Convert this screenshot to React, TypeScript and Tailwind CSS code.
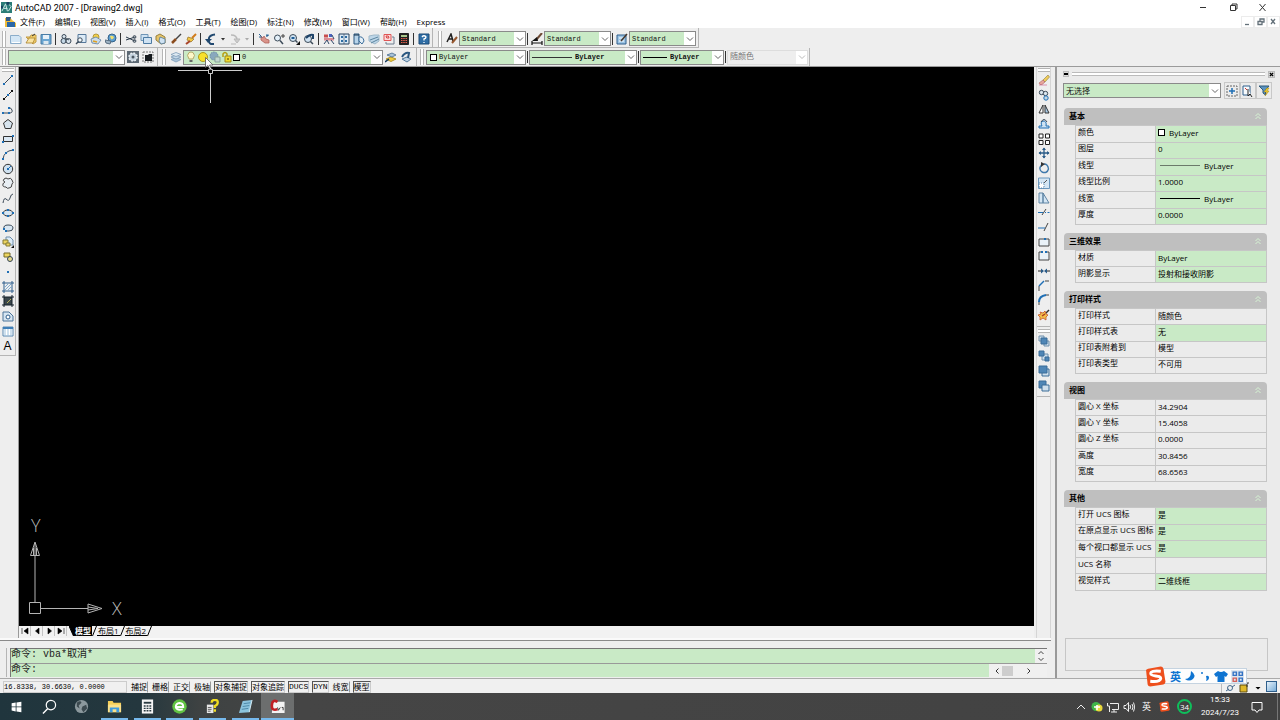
import type { ReactNode } from 'react';

const UI = "font-['Open_Sans','Noto_Sans_CJK_SC',sans-serif]";
const MONO = "font-['Liberation_Mono','Noto_Sans_CJK_SC',monospace]";

function Glyph({ children }: { children: ReactNode }) {
  return (
    <svg viewBox="0 0 12 12" className="size-3 shrink-0" fill="none" stroke="#3c4a58" strokeWidth="1" aria-hidden="true">
      {children}
    </svg>
  );
}

const B = '#1f6fb5';
const node = (x: number, y: number, c = B) => <rect x={x - 1} y={y - 1} width="2" height="2" fill={c} stroke="none" />;

const icons: Record<string, ReactNode> = {
  new: <><path d="M.5 2.500h8.500l2 2v6H.5z" fill="#d3e6f5" stroke="#8badca" /><path d="M2 9.500h8" stroke="#fff" /></>,
  open: <><path d="M1 4h4l1-2h5v7l-3 2z" fill="#f3cf6b" stroke="#c09a45" /><path d="M1 10l3-5h6l-2 5z" fill="#f9e3a0" stroke="#a8802c" strokeWidth=".8" /><path d="M7 3l3-2" stroke="#333" /></>,
  save: <><path d="M1 1.500h10v9.500H1z" fill="#6ba6d2" stroke="#4a7ca5" /><path d="M3 2h6v4H3z" fill="#e8f1f8" stroke="none" /><path d="M3.500 8h5v3h-5z" fill="#dce8f0" stroke="none" /></>,
  plot: <><circle cx="4" cy="3.500" r="2" fill="#dbe6ee" /><circle cx="3.500" cy="8" r="2.500" fill="#c4d7e5" /><circle cx="8.500" cy="8" r="2.500" fill="#dbe6ee" /><path d="M5 5l4 2" /></>,
  preview: <><path d="M3 1.500h8v8H3z" fill="#dcebf7" stroke="#56789a" /><circle cx="5" cy="7" r="2.200" fill="#f4fafe" /><path d="M3.500 8.500L1 11" strokeWidth="1.500" /></>,
  publish: <><circle cx="6" cy="4" r="3" fill="#f2cf4a" stroke="#b3983a" /><path d="M1 6l5-2 5 3-3 4-6-1z" fill="#cbdcea" stroke="#5e7f9f" strokeWidth=".8" /><path d="M3 8l4 1" stroke="#e0a020" strokeWidth="1.500" /></>,
  web: <><circle cx="7" cy="5" r="4" fill="#5d9fd0" stroke="#33628a" /><path d="M5 3q2-1 4 1q-1 3-3 2z" fill="#f1df6c" stroke="none" /><path d="M0 7l6 1-1 3-4-1z" fill="#9fb4c5" stroke="#5a6e80" /></>,
  cut: <><path d="M1 4l9 4M1 7l9-3" stroke="#2b3b4b" /><circle cx="9.500" cy="4" r="1.400" /><circle cx="9.500" cy="8" r="1.400" /></>,
  copy: <><path d="M1 1.500h7v6H1z" fill="#cfe2f2" stroke="#6f94b5" /><path d="M3.500 4.500h8v6h-8z" fill="#cfe2f2" stroke="#4d7ba3" /></>,
  paste: <><path d="M1 3l4-2 5 3v6l-4 1-5-4z" fill="#e5c368" stroke="#97803e" /><path d="M5 4l5 2v4l-4 1-2-3z" fill="#cfe2f2" stroke="#51789b" strokeWidth=".8" /></>,
  brush: <><path d="M11 1L6 6" stroke="#444" strokeWidth="1.500" /><path d="M6 6L2 10" stroke="#8a4b1e" strokeWidth="2.500" /></>,
  match: <><path d="M11 1L7 5" stroke="#d17b1c" strokeWidth="2" /><path d="M3 4l6 2-3 3-4-2z" fill="#f2c646" stroke="#9f7d30" strokeWidth=".8" /><path d="M1 11l4-3" stroke="#a8442a" strokeWidth="2" /></>,
  undo: <><path d="M9 11H6q-3-1-2-6q1-3 6-3.500" stroke="#20486f" strokeWidth="2" /><path d="M0 6h7l-4 4z" fill="#20486f" stroke="none" /></>,
  redo: <><path d="M2 2q6 0 6 5" stroke="#b9b9b9" strokeWidth="1.500" /><path d="M5 6h6l-3 4zM2 11h5" fill="#ccc" stroke="#b9b9b9" /></>,
  down: <path d="M4 5h4L6 7.500z" fill="#333" stroke="none" />,
  downOff: <path d="M4 5h4L6 7.500z" fill="#aaa" stroke="none" />,
  pan: <><path d="M3 3l2 2 1-2 2 3 3 1v3H7L3 7z" fill="#d9938a" stroke="#b0625b" strokeWidth=".8" /><path d="M1 1l2 2M9 1v3M8 3l3-1M1 4h3" stroke="#2a6496" /></>,
  zoomRt: <><circle cx="4.500" cy="5" r="3" fill="#e4f0f9" /><path d="M7 7.500L10 11" strokeWidth="1.500" /><path d="M8 3h4M10 1v4" stroke="#444" /></>,
  zoomWin: <><circle cx="5" cy="5" r="3.500" fill="#cfe2f2" /><path d="M3.500 4h3v2h-3z" fill="#1e5c94" stroke="none" /><path d="M7.500 7.500l2 2" strokeWidth="1.500" /><path d="M12 8v4H8z" fill="#111" stroke="none" /></>,
  zoomPrev: <><circle cx="5" cy="6" r="3.500" fill="#cfe2f2" /><path d="M7.500 8.500L10 11" strokeWidth="1.500" /><path d="M3 5q4-4 7-3v4" stroke="#1d4268" strokeWidth="2" /></>,
  props: <><path d="M1 1.500h4v3H1z" fill="#c94d4d" stroke="none" /><path d="M6 1h3v3H6z" fill="#4c64bd" stroke="none" /><path d="M1 5h10v2.500H1z" fill="#da8a92" stroke="none" /><path d="M1 11l3-4 2 4M8 7l3 4M9 2l2 4" stroke="#2e4667" /></>,
  dc: <><path d="M1 1h10v10H1z" fill="#dcebf7" stroke="#29425e" /><path d="M3 3h2v2H3zM7 3h2v2H7zM3 7h2v2H3zM7 7h2v2H7z" fill="#2d6ca3" stroke="none" /><path d="M6 1v10" stroke="#29425e" strokeWidth=".6" /></>,
  palette: <><path d="M1 1h5v10H1z" fill="#b8d4ea" stroke="#2a567e" /><path d="M6 4q4-1 5 4l-2 3-3-3z" fill="#e3eef6" stroke="#3c6e9c" /><path d="M1 2h5" stroke="#16324c" /></>,
  sheet: <><path d="M1 3l5-1 5 0v6l-4 3-6-3z" fill="#bdd6e8" stroke="#9fb8c9" /><path d="M2 7l8-3M3 10l8-4" stroke="#5c859f" /></>,
  markup: <><path d="M1 1.500h7v6H1z" fill="#fbdcdc" stroke="#e05555" /><path d="M9 4h2v7H3V9" stroke="#6f7f8f" /><path d="M3 3q3-1 3 2q-3 1-3-2" stroke="#d84545" /></>,
  calc: <><path d="M1.500.5h9v11h-9z" fill="#222" stroke="#222" /><path d="M3 2h6v2H3z" fill="#a9c78b" stroke="none" /><path d="M3 5.500h6M3 7.500h6M3 9.500h6" stroke="#e35f4d" strokeDasharray="1.500 .75" /></>,
  help: <><path d="M1 1h10v10H1z" fill="#2f6ea6" stroke="#1c4b77" /><path d="M4 4q2-2.500 4 0q0 1.500-2 2v1.500M6 9v1" stroke="#fff" strokeWidth="1.300" /></>,
  textStyle: <><path d="M1 9L5 1l2 7M3 6h4" stroke="#222" strokeWidth="1.500" /><path d="M6 10l5-6" stroke="#96562e" strokeWidth="2" /></>,
  dimStyle: <><path d="M1 8v4M11 8v4M1 10h10" stroke="#111" strokeWidth="1.200" /><path d="M5 7l6-7" stroke="#6d4a35" strokeWidth="2" /><path d="M1 8l5-4 1 4z" fill="#111" stroke="none" /></>,
  tableStyle: <><path d="M1 2h9v9H1z" fill="#9cc4e4" stroke="#2f5f8c" /><path d="M3 5h5M3 8h5" stroke="#fff" /><path d="M5 8l6-7" stroke="#46362b" strokeWidth="1.500" /></>,
  gear: <><rect x="0" y="0" width="12" height="12" fill="#5d6974" stroke="none" /><circle cx="6" cy="6" r="4" fill="#c6d4e0" stroke="#eef3f6" strokeWidth="1.500" strokeDasharray="1.600 1.540" /><circle cx="6" cy="6" r="1.500" fill="#4d5964" stroke="none" /></>,
  wsSave: <><rect x="1" y="1" width="10" height="10" stroke="#777" strokeDasharray="2 1" /><path d="M3 4h3l1-1h3v7H3z" fill="#15191d" stroke="none" /></>,
  layers: <><path d="M1 8.500l5-2 5 2-5 2.500z" fill="#a9c3d9" stroke="#7d9cb8" strokeWidth=".8" /><path d="M1 6l5-2 5 2-5 2z" fill="#c5d9e9" stroke="#7d9cb8" strokeWidth=".8" /><path d="M1 3.500l5-2 5 2-5 2z" fill="#dde9f2" stroke="#7d9cb8" strokeWidth=".8" /></>,
  layerCur: <><path d="M1 8l5-2 5 2-5 2.500z" fill="#f0cc3c" stroke="#b5952a" /><path d="M2 4l5-2 4 2-4 2z" fill="#a9c3d9" stroke="#46698c" strokeWidth=".8" /><path d="M0 11l4-3" stroke="#163a5d" strokeWidth="1.500" /></>,
  layerPrev: <><path d="M2 8l5-2 4 2-4 3z" fill="#bcd1e2" stroke="#53789a" /><path d="M2 6q3-5 7-4l-1 5" stroke="#2a577f" strokeWidth="2" /></>,
  bulb: <><path d="M4 8Q1 4 4 1.500q2-1 4 0Q11 4 8 8z" fill="#fdf7c9" stroke="#b5a968" /><path d="M4.500 10h3" stroke="#666" strokeWidth="2" /></>,
  sun: <circle cx="6" cy="6" r="4.500" fill="#f7e12c" stroke="#b09c1e" />,
  freeze: <><circle cx="5" cy="5" r="4" fill="#88a8bd" stroke="#6d8ca0" strokeDasharray="1.500 1" /><path d="M6 6h5v5H6z" fill="#c3d7cf" stroke="#88a29a" /></>,
  lock: <><path d="M2 6V3q2-3 4 0v2" stroke="#b5a012" strokeWidth="1.500" /><path d="M4 5h6v6H4z" fill="#f0dc30" stroke="#a08c1c" /><path d="M7 7v2" stroke="#443c06" /></>,
  line: <><path d="M2 10l8-8" />{node(2, 10)}{node(10, 2)}</>,
  xline: <><path d="M1 11L11 1" stroke="#222" />{node(2, 10, '#111')}{node(6, 6)}{node(10, 2, '#111')}</>,
  pline: <><path d="M1 9h6q4 0 3-3T6 4" />{node(1, 9)}{node(7, 9)}{node(7, 4)}</>,
  polygon: <path d="M6 1.500l4.500 3.500-1.700 5.500H3.200L1.500 5z" fill="#d7e4ee" stroke="#333" />,
  rect: <><path d="M1.500 3.500h9v5h-9z" fill="#dbe9f5" stroke="#333" />{node(1, 9)}{node(11, 3)}</>,
  arc: <><path d="M1 11Q2 3 11 2" />{node(1, 11)}{node(4, 5)}{node(11, 2)}</>,
  circle: <><circle cx="6" cy="6" r="4.700" fill="#cfe1f0" stroke="#333" /><path d="M6 6l3-3" stroke={B} />{node(6, 6)}</>,
  cloud: <path d="M3 5q-3-1-1-3 2-2 4 0 3-2 4 1 2 3 0 4 0 4-3 4-2 1-3-1-4 0-3-3 0-1 2-2z" fill="#e8eef3" stroke="#444" />,
  spline: <path d="M1 11q1-6 3-4 3 3 4-1t3-4" />,
  ellipse: <><ellipse cx="6" cy="6" rx="4.500" ry="3" fill="#d7e6f2" stroke="#333" />{node(1, 6)}{node(11, 6)}{node(6, 3)}{node(6, 9)}</>,
  earc: <><path d="M2 7q-1-4 4-4t5 3-4 3H4" fill="#d7e6f2" />{node(4, 9)}{node(2, 7)}</>,
  insert: <><path d="M4 1h4l3 3v5H4z" fill="#dcebf7" stroke="#6c8dab" /><path d="M1 4h5v4H1z" fill="#ecd560" stroke="#857a35" /><path d="M4 7h4v3H4z" fill="#ecd560" stroke="#857a35" /><path d="M12 9v3H9z" fill="#111" stroke="none" /></>,
  block: <><path d="M2 2h6v4H2z" fill="#ecd560" stroke="#766a25" /><circle cx="8" cy="8" r="2.500" fill="#e5d98c" stroke="#345" /></>,
  point: <rect x="5" y="5" width="2" height="2" fill={B} stroke="none" />,
  hatch: <><path d="M2 0v12M10 0v12M0 2h12M0 10h12" stroke="#2f5f8c" /><path d="M3 6l3-3M3 9l6-6M6 9l3-3" stroke="#7fabd0" /></>,
  gradient: <><rect x="2" y="2" width="8" height="8" fill="#3a464b" stroke="none" /><path d="M2 0v12M10 0v12M0 2h12M0 10h12" stroke="#14202a" /><path d="M5 8l4-4" stroke="#b5ae58" /></>,
  region: <><path d="M1 2h6l4 4v5H1z" fill="#d7e6f2" stroke="#4c7599" /><circle cx="6" cy="7" r="2" fill="#fff" stroke="#2f5f8c" /></>,
  table: <><path d="M1 2h10v9H1z" fill="#fff" stroke="#5b88b0" /><path d="M1 3h10" stroke="#3f7fb8" strokeWidth="2" /><path d="M3 4v7M6 4v7M9 4v7" stroke="#9fc2dd" /></>,
  erase: <><path d="M5 6l5-5 1.500 2L7 8z" fill="#f0cd5c" stroke="#8f7c3c" strokeWidth=".6" /><path d="M1 9l4-3 2 2-3 2.500H2z" fill="#e8a59c" stroke="#a8605a" strokeWidth=".6" /><path d="M1 11h8" stroke="#c58" strokeWidth=".6" /></>,
  copyObj: <><circle cx="3.500" cy="3.500" r="2.200" fill="#dbe6ee" /><circle cx="7.500" cy="4.500" r="2.200" fill="#dbe6ee" /><circle cx="8" cy="9" r="2.200" fill="#c4d7e5" stroke={B} /></>,
  mirror: <><path d="M5 2v8H1z" fill="#fff" stroke="#333" /><path d="M7 2v8h4z" fill="#a9cae5" stroke="#333" /></>,
  offset: <><path d="M1 10h10V8H8q1-5-3-5-3 1-1 5H1z" fill="#cfe2f2" stroke={B} /><path d="M3 4q3-5 6 0" /></>,
  array: <path d="M1 1h4v4H1zM7.500 1h4v4h-4zM1 7.500h4v4H1zM7.500 7.500h4v4h-4z" fill="#fff" stroke="#222" />,
  move: <><path d="M6 1v10M1 6h10" stroke="#2b5c88" strokeWidth="1.300" /><path d="M4 3l2-2.500L8 3zM4 9l2 2.500L8 9zM3 4L.5 6 3 8zM9 4l2.500 2L9 8z" fill="#2b5c88" stroke="none" /></>,
  rotate: <><path d="M3.500 3Q0 7 4 10q5 2 6.500-3Q10 2 6 2" stroke="#3f79ac" strokeWidth="1.400" /><path d="M3 0l4 2-4 3z" fill="#333" stroke="none" /></>,
  scale: <><path d="M.5 1h11v10.500H.5z" fill="#d4e6f4" stroke="#6a96bc" /><path d="M1 6h5v5H1z" fill="#fff" stroke="#5a88b0" strokeDasharray="1 1" /><path d="M6 6l3-3" stroke="#555" /></>,
  stretch: <path d="M1 1h4v10H1zM5 1l6 10H5z" fill="#d4e6f4" stroke="#5f84a4" />,
  trim: <><path d="M0 6.500h5M7 6.500h1M9.500 6.500h2" stroke={B} /><path d="M4 9l4-6" stroke="#444" /></>,
  extend: <><path d="M0 7h7" stroke={B} /><path d="M6 10l4-8" stroke="#444" /></>,
  breakPt: <><path d="M1 3h10v7H1z" fill="#eaf2f8" stroke="#444" />{node(7, 3)}</>,
  break: <><path d="M4 2H1v8h10V2H8" fill="#eaf2f8" stroke="#444" />{node(4, 2)}{node(8, 2)}</>,
  join: <><path d="M0 6h5M7 6h5" stroke="#222" /><path d="M3 3.500v5L6 6zM9 3.500v5L6 6z" fill="#2b5c88" stroke="none" /></>,
  chamfer: <><path d="M1 11V6M7 1h4" stroke="#444" /><path d="M1 6l5-5" stroke={B} strokeWidth="1.500" /></>,
  fillet: <><path d="M1 11V7M8 1h3" stroke="#444" /><path d="M1 8q0-6 7-7" stroke={B} strokeWidth="2" /></>,
  explode: <><path d="M11 1L7 5" stroke="#333" strokeWidth="1.500" /><path d="M2 3l3 1 2-2 1 3 2 1-2 2v3l-3-2-3 2V8L0 6l3-1z" fill="#f2c04a" stroke="#c4562c" strokeWidth=".8" /><path d="M4 7l3-2" stroke="#b03a20" strokeWidth="1.500" /></>,
  ordFront: <><path d="M1 1h5v5H1zM6 6h5v5H6z" fill="#cfdfec" stroke="#6f8fab" /><path d="M3 3h6v6H3z" fill="#4f86b6" stroke="#3a6c98" /></>,
  ordBack: <><path d="M4 4h6v6H4z" fill="#cfdfec" stroke="#6f8fab" /><path d="M1 1h5v5H1zM7 7h4v4H7z" fill="#4f86b6" stroke="#3a6c98" /></>,
  ordAbove: <><path d="M4 4h7v7H4z" fill="#cfdfec" stroke="#3a6c98" /><path d="M1 1h8v7H1z" fill="#4f86b6" stroke="#3a6c98" /></>,
  ordUnder: <><path d="M1 1h7v7H1z" fill="#4f86b6" stroke="#3a6c98" /><path d="M4 5h7v6H4z" fill="#cfdfec" stroke="#3a6c98" /></>,
  pick: <><rect x="1" y="1" width="10" height="10" stroke="#666" strokeDasharray="2 1" /><path d="M6 3v6M3 6h6" stroke={B} strokeWidth="1.500" /></>,
  selObj: <><path d="M1 1h7v9H1z" fill="#f6fafc" stroke="#2f5f8c" /><path d="M3 3l2 2" stroke="#c33" /><path d="M6 4v7l2-2 2 3" fill="#fff" stroke="#222" /></>,
  filter: <><path d="M1 1h10L7.500 5v5L5 8V5z" fill="#5b93c0" stroke="#2d5878" /><path d="M9 3L6 7h3l-2 4 4-5H9l2-3z" fill="#f5d028" stroke="#a5861a" strokeWidth=".5" /></>,
};

type ToolDef = [string, string];

function Tool({ name, label, narrow, short }: { name: string; label: string; narrow?: boolean; short?: boolean }) {
  return (
    <button type="button" aria-label={label} title={label}
      className={`flex shrink-0 items-center justify-center ${narrow ? 'w-[9px]' : 'w-[15px]'} ${short ? 'h-[14px]' : 'h-[15px]'}`}>
      <Glyph>{icons[name]}</Glyph>
    </button>
  );
}

const Tools = ({ list }: { list: ToolDef[] }) => <>{list.map(([n, l]) => <Tool key={n} name={n} label={l} />)}</>;
const Sep = () => <div className="mx-[2px] h-3 w-px shrink-0 bg-[#333]" />;
const ThinSep = () => <div className="mx-px h-3 w-px shrink-0 bg-[#333]" />;
const Grip = () => <div className="mx-[2px] h-4 w-1 shrink-0 border-x border-[#b5b5b5] bg-white" />;
const HGrip = () => <div className="my-px h-1 w-3 shrink-0 self-center border-y border-[#b5b5b5] bg-white" />;

function Combo({ label, value, lead, className, disabled, bold }: {
  label: string; value: string; lead?: ReactNode; className: string; disabled?: boolean; bold?: boolean;
}) {
  return (
    <div className={`flex h-[15px] shrink-0 items-stretch border ${disabled ? 'border-[#ddd] bg-[#eee] text-[#777]' : 'border-[#8a8a8a] bg-[#c9eac6] text-[#111]'} ${className}`}>
      {lead}
      <select aria-label={label} disabled={disabled} defaultValue={value} className={`min-w-0 flex-1 appearance-none bg-transparent pl-[2px] outline-none ${bold ? 'font-bold' : ''}`}>
        <option>{value}</option>
      </select>
      <span className="pointer-events-none flex w-[11px] items-center justify-center bg-white">
        <svg viewBox="0 0 8 6" className="h-[6px] w-2" fill="none" stroke={disabled ? '#bbb' : '#666'}><path d="M1 1.500l3 3 3-3" /></svg>
      </span>
    </div>
  );
}

const menus = ['文件(F)', '编辑(E)', '视图(V)', '插入(I)', '格式(O)', '工具(T)', '绘图(D)', '标注(N)', '修改(M)', '窗口(W)', '帮助(H)', 'Express'];

const drawTools: ToolDef[] = [['line', '直线'], ['xline', '构造线'], ['pline', '多段线'], ['polygon', '正多边形'], ['rect', '矩形'], ['arc', '圆弧'], ['circle', '圆'], ['cloud', '修订云线'], ['spline', '样条曲线'], ['ellipse', '椭圆'], ['earc', '椭圆弧'], ['insert', '插入块'], ['block', '创建块'], ['point', '点'], ['hatch', '图案填充'], ['gradient', '渐变色'], ['region', '面域'], ['table', '表格']];
const modifyTools: ToolDef[] = [['erase', '删除'], ['copyObj', '复制'], ['mirror', '镜像'], ['offset', '偏移'], ['array', '阵列'], ['move', '移动'], ['rotate', '旋转'], ['scale', '缩放'], ['stretch', '拉伸'], ['trim', '修剪'], ['extend', '延伸'], ['breakPt', '打断于点'], ['break', '打断'], ['join', '合并'], ['chamfer', '倒角'], ['fillet', '圆角'], ['explode', '分解']];
const orderTools: ToolDef[] = [['ordFront', '前置'], ['ordBack', '后置'], ['ordAbove', '置于对象之上'], ['ordUnder', '置于对象之下']];

type Row = { k: string; v: string; on?: boolean; mark?: 'swatch' | 'thin' | 'solid' };
type Group = { title: string; height: string; rows: Row[] };
const groups: Group[] = [
  { title: '基本', height: 'h-[100px]', rows: [
    { k: '颜色', v: 'ByLayer', on: true, mark: 'swatch' }, { k: '图层', v: '0', on: true }, { k: '线型', v: 'ByLayer', on: true, mark: 'thin' },
    { k: '线型比例', v: '1.0000', on: true }, { k: '线宽', v: 'ByLayer', on: true, mark: 'solid' }, { k: '厚度', v: '0.0000', on: true }] },
  { title: '三维效果', height: 'h-[33px]', rows: [{ k: '材质', v: 'ByLayer', on: true }, { k: '阴影显示', v: '投射和接收阴影', on: true }] },
  { title: '打印样式', height: 'h-[66px]', rows: [{ k: '打印样式', v: '随颜色' }, { k: '打印样式表', v: '无', on: true }, { k: '打印表附着到', v: '模型' }, { k: '打印表类型', v: '不可用' }] },
  { title: '视图', height: 'h-[83px]', rows: [{ k: '圆心 X 坐标', v: '34.2904' }, { k: '圆心 Y 坐标', v: '15.4058' }, { k: '圆心 Z 坐标', v: '0.0000' }, { k: '高度', v: '30.8456' }, { k: '宽度', v: '68.6563' }] },
  { title: '其他', height: 'h-[84px]', rows: [{ k: '打开 UCS 图标', v: '是', on: true }, { k: '在原点显示 UCS 图标', v: '是', on: true }, { k: '每个视口都显示 UCS', v: '是', on: true }, { k: 'UCS 名称', v: '' }, { k: '视觉样式', v: '二维线框', on: true }] },
];

function PropertyGroup({ group }: { group: Group }) {
  return (
    <section>
      <h2 className="flex h-[17px] items-center justify-between rounded-t-[4px] bg-[#bfbfbf] px-[5px] pb-[2px] text-[8px] font-bold">
        {group.title}
        <button type="button" aria-label={`折叠 ${group.title}`}>
          <svg viewBox="0 0 8 8" className="size-2" fill="none" stroke="#d7f5d4"><path d="M1.500 4L4 1.500 6.500 4M1.500 7L4 4.500 6.500 7" /></svg>
        </button>
      </h2>
      <div className="pl-[11px]">
        <table className={`w-full table-fixed border-collapse ${group.height}`}>
          <tbody>
            {group.rows.map((r) => (
              <tr key={r.k}>
                <th scope="row" className="w-[80px] border border-[#c6c6c6] p-0 pb-[4px] pl-[2px] text-left text-[8px] leading-[10px] font-normal whitespace-nowrap">{r.k}</th>
                <td className={`border border-[#c6c6c6] p-0 pb-[2px] pl-[2px] text-[8px] leading-[10px] ${r.on ? 'bg-[#c9eac6]' : ''}`}>
                  <div className="flex h-[10px] items-center gap-[4px]">
                    {r.mark === 'swatch' && <span className="size-[7px] border border-black bg-white" />}
                    {r.mark === 'thin' && <span className="ml-[2px] h-px w-10 bg-[#6b7a6a]" />}
                    {r.mark === 'solid' && <span className="ml-[2px] h-px w-10 bg-black" />}
                    {r.v}
                  </div>
                </td>
              </tr>
            ))}
          </tbody>
        </table>
      </div>
    </section>
  );
}

const statusToggles: [string, boolean][] = [['捕捉', false], ['栅格', false], ['正交', false], ['极轴', false], ['对象捕捉', true], ['对象追踪', true], ['DUCS', true], ['DYN', true], ['线宽', false], ['模型', true]];

const taskApps: { label: string; run?: boolean; active?: boolean; art: ReactNode }[] = [
  { label: '开始', art: <path d="M2 4l5-1v5H2zM8 3l6-1v6H8zM2 9h5v5l-5-1zM8 9h6v6l-6-1z" fill="#fff" /> },
  { label: '搜索', art: <><circle cx="9.500" cy="6.500" r="5" fill="none" stroke="#fff" strokeWidth="1.300" /><path d="M6 10.500L1 15.500" stroke="#fff" strokeWidth="1.500" /></> },
  { label: '浏览器', art: <><circle cx="8" cy="8" r="7" fill="#8b989d" /><path d="M3 4q4-3 5 0l-3 3 1 3-3-2zM9 8l4-2 1 4-4 4-2-3z" fill="#3c4a50" /></> },
  { label: '文件资源管理器', run: true, art: <><path d="M1 2h5l1 2h8v10H1z" fill="#f5cf58" /><path d="M1 6h14v8H1z" fill="#fbe08a" /><path d="M3 14V9h10v5h-3v-3H6v3z" fill="#3f9be0" /></> },
  { label: '计算器', run: true, art: <><path d="M2 .5h12v15H2z" fill="#f5f5f5" /><path d="M4 3h8v2H4z" fill="#2b3b42" /><path d="M4 7.500h8M4 10h8M4 12.500h8" stroke="#2b3b42" strokeWidth="1.500" strokeDasharray="2 1" /></> },
  { label: '360浏览器', run: true, art: <><circle cx="8" cy="8" r="7.700" fill="#61c243" /><path d="M4 8.500h8q0-4-4-4.200-4 .4-4 4.200 1 4 7.500 2.500" fill="none" stroke="#fff" strokeWidth="2" /></> },
  { label: '帮助', run: true, art: <><path d="M2 6h7v9H2z" fill="#e8e8e8" /><path d="M3 9h4M3 11h4M3 13h3" stroke="#555" /><path d="M7 4q0-3 3.500-3t3 3q0 2-3 3.500v2M10.500 11v2.500" stroke="#f0dd21" strokeWidth="2.500" fill="none" /></> },
  { label: '记事本', run: true, art: <><path d="M5 2l10-1-3 13-11 1z" fill="#8cc4dd" /><path d="M6 5l7-1M5 8l7-1M4 11l7-1" stroke="#4b86a5" /><path d="M12 14l3-13" stroke="#d9eef6" /></> },
  { label: 'CAD', run: true, active: true, art: <><path d="M3 3h12.500v12H2z" fill="#f3f3f3" /><path d="M8 3Q2.500 0 2 6.500t6 4.500" stroke="#c11f25" strokeWidth="2.800" fill="none" /><path d="M8 9l1 3 2-3M12.500 9h1.500v3" stroke="#333" fill="none" /></> },
];

const Sogou = ({ className }: { className: string }) => (
  <svg viewBox="0 0 20 20" className={className} aria-hidden="true">
    <path d="M1 4Q1 3 3 2.500L15 .5q2 0 2.500 2L19.500 15q0 2-2 2.500L5 19.500q-2 0-2.500-2z" fill="#ee4f1c" />
    <path d="M15 5Q5 4 5.500 7.500c.5 3 10 1 9.500 4.500q-1 3.500-10 2.500" fill="none" stroke="#fff" strokeWidth="2.800" />
  </svg>
);

export default function App() {
  return (
    <div className={`relative flex min-h-screen w-full flex-col overflow-hidden bg-[#eee] text-[8px] leading-[12px] text-black ${UI}`}>
      <header className="bg-white">
        <div className="flex h-[15px] items-center">
          <svg viewBox="0 0 12 12" className="ml-px size-[11px]" aria-hidden="true"><path d="M0 0h12v12H0z" fill="#2b7d78" /><path d="M1 10L5 2l2 8M3 7h4M8 2l3 3-3 5" stroke="#d7efec" fill="none" /><path d="M6 0h3v3H6zM0 4h2v3H0z" fill="#173f5d" /></svg>
          <h1 className="ml-[3px] flex-1 font-['Roboto',sans-serif] text-[9px]">AutoCAD 2007 - [Drawing2.dwg]</h1>
          <div className="flex">
            {[['最小化', 'M4 6.500h6'], ['还原', 'M4.500 4.500h5v5h-5zM6 4.500V3h5v5H9.500'], ['关闭', 'M3.500 3l6 7M9.500 3l-6 7']].map(([l, d]) => (
              <button key={l} type="button" aria-label={l} className="flex w-[30px] justify-center"><svg viewBox="0 0 13 13" className="size-[13px]" fill="none" stroke="#333"><path d={d} /></svg></button>
            ))}
          </div>
          <div className="w-[3px]" />
        </div>
        <nav className="flex h-[13px] items-center">
          <svg viewBox="0 0 12 12" className="ml-[4px] size-[12px]" aria-hidden="true"><path d="M1 2l5-1 2 3 4 3v4H1z" fill="#f0bd3c" /><path d="M3 6h8v5H3z" fill="#2a67a7" /><path d="M2 1l5 0-1 4H2z" fill="#355a86" /></svg>
          <div className="flex flex-1 gap-[10px] pl-[4px]">
            {menus.map((m) => <button key={m} type="button" className="whitespace-nowrap">{m}</button>)}
          </div>
          {[['最小化图形', 'M3 8.500h4'], ['还原图形', 'M3 5.500h4v3H3zM5 5V3h4v3H7'], ['关闭图形', 'M3 3l4 5M7 3L3 8']].map(([l, d]) => (
            <button key={l} type="button" aria-label={l} className="flex h-[12px] w-[13px] items-center justify-center border border-[#ececec]"><svg viewBox="0 0 11 11" className="size-[11px]" fill="none" stroke="#637079" strokeWidth="1.300"><path d={d} /></svg></button>
          ))}
        </nav>
      </header>

      <div className={`flex flex-col border-b border-[#9a9a9a] text-[7px] ${MONO}`}>
        <div className="flex h-[20px]">
          <div role="toolbar" aria-label="标准" className="flex items-center border-r border-b border-[#b5b5b5] pt-[2px] pr-px">
            <Grip />
            <Tools list={[['new', '新建'], ['open', '打开'], ['save', '保存']]} /><Sep />
            <Tools list={[['plot', '打印'], ['preview', '打印预览'], ['publish', '发布'], ['web', '三维 DWF']]} /><Sep />
            <Tools list={[['cut', '剪切'], ['copy', '复制到剪贴板'], ['paste', '粘贴'], ['brush', '特性匹配'], ['match', '块编辑器']]} /><Sep />
            <Tool name="undo" label="放弃" /><Tool name="down" label="放弃列表" narrow /><Tool name="redo" label="重做" /><Tool name="downOff" label="重做列表" narrow /><Sep />
            <Tools list={[['pan', '实时平移'], ['zoomRt', '实时缩放'], ['zoomWin', '窗口缩放'], ['zoomPrev', '缩放上一个']]} /><Sep />
            <Tools list={[['props', '特性'], ['dc', '设计中心'], ['palette', '工具选项板'], ['sheet', '图纸集管理器'], ['markup', '标记集管理器'], ['calc', '快速计算器']]} /><Sep />
            <Tool name="help" label="帮助" />
          </div>
          <div role="toolbar" aria-label="样式" className="flex items-center border-r border-b border-[#b5b5b5] pt-[2px] pr-[2px] pl-[3px]">
            <Grip /><Tool name="textStyle" label="文字样式" />
            <Combo label="文字样式" value="Standard" className="w-[67px]" /><ThinSep />
            <Tool name="dimStyle" label="标注样式" />
            <Combo label="标注样式" value="Standard" className="w-[67px]" /><ThinSep />
            <Tool name="tableStyle" label="表格样式" />
            <Combo label="表格样式" value="Standard" className="w-[67px]" />
          </div>
        </div>
        <div className="flex h-[18px]">
          <div role="toolbar" aria-label="工作空间" className="flex items-center border-r border-[#b5b5b5] pr-[2px]">
            <Grip /><Combo label="工作空间" value="" className="w-[117px]" />
            <Tools list={[['gear', '工作空间设置'], ['wsSave', '我的工作空间']]} />
          </div>
          <div role="toolbar" aria-label="图层" className="flex items-center border-r border-[#b5b5b5] pr-[3px] pl-[2px]">
            <Grip /><Tool name="layers" label="图层特性管理器" />
            <Combo label="图层" value="0" className="w-[200px]" lead={
              <span className="flex items-center pl-px">
                <Glyph>{icons.bulb}</Glyph><Glyph>{icons.sun}</Glyph><Glyph>{icons.freeze}</Glyph><Glyph>{icons.lock}</Glyph>
                <span className="size-[7px] border border-black bg-white" />
              </span>} />
            <Tools list={[['layerCur', '将对象的图层置为当前'], ['layerPrev', '上一个图层']]} />
          </div>
          <div role="toolbar" aria-label="对象特性" className="flex items-center border-r border-[#b5b5b5] pr-px pl-px">
            <Grip />
            <Combo label="颜色" value="ByLayer" className="w-[100px]" lead={<span className="ml-[3px] size-[7px] self-center border border-black bg-white" />} /><ThinSep />
            <Combo label="线型" value="ByLayer" bold className="w-[108px]" lead={<span className="mr-px ml-[2px] h-px w-10 self-center bg-[#333]" />} /><ThinSep />
            <Combo label="线宽" value="ByLayer" bold className="w-[84px]" lead={<span className="mr-px ml-[2px] h-px w-[24px] self-center bg-black" />} /><ThinSep />
            <Combo label="打印样式" value="随颜色" disabled className="w-[81px] text-[8px]" />
          </div>
        </div>
      </div>

      <div className="flex min-h-0 flex-1">
        <main className="flex min-w-0 flex-1 flex-col">
          <div className="flex min-h-0 flex-1">
            <div className="w-[18px] shrink-0">
              <div role="toolbar" aria-label="绘图" className="mr-[2px] flex flex-col border-r border-b border-[#b5b5b5] pb-[2px]">
                <HGrip />
                <div className="flex h-[280px] flex-col items-center justify-between">
                  {drawTools.map(([n, l]) => <Tool key={n} name={n} label={l} short />)}
                  <button type="button" aria-label="多行文字" className="h-[14px] font-['Liberation_Sans',sans-serif] text-[12px] leading-[14px]">A</button>
                </div>
              </div>
            </div>
            <div className="flex min-w-0 flex-1 flex-col border-l border-[#999]">
              <div className="relative min-h-0 flex-1 bg-black">
                <svg viewBox="0 0 64 34" className="absolute top-[2px] left-[159px] h-[34px] w-16" fill="none" stroke="#ccc" aria-hidden="true"><path d="M0 1.500h30M34 1.500h30M32.500 4v30" /><path d="M30.500.5h4v4h-4z" /></svg>
                <svg viewBox="19 506 120 120" className="absolute bottom-0 left-0 size-[120px]" fill="none" stroke="#b4b4b4" aria-label="UCS 图标">
                  <path d="M29.500 602.500h11v11h-11zM35 602V555.500M41 608.500h47M35 542l-4.500 13.500h9zM35 543v12M33.500 548v7M36.500 548v7M102 608.500l-14-4.500v9zM88 607l10 1.500-10 1.500" />
                  <text x="31" y="532" fill="#bbb" stroke="none" className="text-[18px] font-light">Y</text>
                  <text x="112" y="615" fill="#bbb" stroke="none" className="text-[18px] font-light">X</text>
                </svg>
              </div>
              <div className="flex h-[12px] items-start bg-[#f2f2f2] text-[8px] leading-[10px]">
                {[['第一个', 'M2 2v6M8 2L4 5l4 3z'], ['上一个', 'M7 2L3.500 5 7 8z'], ['下一个', 'M4 2l3.500 3L4 8z'], ['最后一个', 'M8 2v6M2 2l4 3-4 3z']].map(([l, d]) => (
                  <button key={l} type="button" aria-label={l} className="flex h-[10px] w-[12px] items-center justify-center border-r border-[#c4c4c4]"><svg viewBox="0 0 10 10" className="size-[10px]" fill="#000" stroke="#000" strokeWidth=".6"><path d={d} /></svg></button>
                ))}
                <div role="tablist" className="ml-[2px] flex">
                  {['模型', '布局1', '布局2'].map((t, i) => (
                    <div key={t} className="flex">
                      <svg viewBox="0 0 5 10" className="h-[10px] w-[5px]" stroke="#000" fill={i === 0 ? '#000' : 'none'}><path d={i === 0 ? 'M0 0l4.500 10H5V0z' : 'M4.500 0l-4 10'} /></svg>
                      <button role="tab" type="button" aria-selected={i === 0} className={`h-[10px] ${i === 0 ? 'bg-black px-px font-bold text-white' : 'border-b border-black px-px'}`}>{t}</button>
                    </div>
                  ))}
                  <svg viewBox="0 0 5 10" className="h-[10px] w-[5px]" stroke="#000"><path d="M4.500 0l-4 10" /></svg>
                </div>
              </div>
            </div>
            <div className="w-[21px] shrink-0 pl-[2px]">
              <div className="mr-[4px] flex h-full flex-col items-stretch border-x border-[#d5d5d5]">
                <div role="toolbar" aria-label="修改" className="flex flex-col border-b border-[#b5b5b5] pb-[4px]">
                  <HGrip />
                  <div className="flex h-[249px] flex-col items-center justify-between">
                    {modifyTools.map(([n, l]) => <Tool key={n} name={n} label={l} short />)}
                  </div>
                </div>
                <div role="toolbar" aria-label="绘图次序" className="flex flex-col border-b border-[#b5b5b5] pt-px pb-[3px]">
                  <HGrip />
                  <div className="flex h-[59px] flex-col items-center justify-between">
                    {orderTools.map(([n, l]) => <Tool key={n} name={n} label={l} short />)}
                  </div>
                </div>
              </div>
            </div>
          </div>

          <div className="mr-[4px] h-[3px] border-b border-[#8a8a8a] bg-[#fafafa]" />
          <div className="h-[7px]" />
          <div className={`flex h-[30px] pr-[8px] pb-px text-[10px] leading-[12px] text-[#222] ${MONO}`}>
            <div className="mx-[3px] w-[4px] border-r border-[#b5b5b5]" />
            <div className="flex min-w-0 flex-1 flex-col border-t border-l border-[#777]">
              <div className="flex h-[14px]">
                <output className="flex-1 bg-[#c9eac6]">命令: vba*取消*</output>
                <div className="flex w-[12px] flex-col items-center bg-[#f0f0f0]">
                  <button type="button" aria-label="向上滚动"><svg viewBox="0 0 8 7" className="block h-[7px] w-2" fill="none" stroke="#444"><path d="M1.500 5L4 2.500 6.500 5" /></svg></button>
                  <button type="button" aria-label="向下滚动"><svg viewBox="0 0 8 7" className="block h-[7px] w-2" fill="none" stroke="#444"><path d="M1.500 2L4 4.500 6.500 2" /></svg></button>
                </div>
              </div>
              <div className="flex h-[14px] border-t border-[#999]">
                <label className="flex flex-1 bg-[#c9eac6]">命令:<input type="text" className="min-w-0 flex-1 bg-transparent outline-none" /></label>
                <div className="flex w-[58px] items-center bg-[#f0f0f0] pl-[4px]">
                  <button type="button" aria-label="向左滚动"><svg viewBox="0 0 8 8" className="block size-2" fill="none" stroke="#333"><path d="M5.500 1.500L3 4l2.500 2.500" /></svg></button>
                  <span className="ml-px h-[10px] w-[11px] bg-[#cdcdcd]" />
                  <span className="w-[12px]" />
                  <button type="button" aria-label="向右滚动"><svg viewBox="0 0 8 8" className="block size-2" fill="none" stroke="#333"><path d="M2.500 1.500L5 4 2.500 6.500" /></svg></button>
                </div>
              </div>
            </div>
          </div>
        </main>

        <aside aria-label="特性" className="flex w-[225px] shrink-0 flex-col border-l-2 border-[#999] bg-[#ebebeb] pb-[7px] pl-[6px]">
          <div className="flex h-[14px] items-center pr-[5px]">
            <button type="button" aria-label="自动隐藏" className="flex size-[6px] items-center border border-[#bbb] bg-[#ddd]"><span className="h-[2px] w-full bg-black" /></button>
            <div className="mx-[3px] h-[4px] flex-1 border-y border-[#bbb] bg-white" />
            <button type="button" aria-label="关闭特性" className="flex size-[7px] items-center justify-center border border-[#bbb] bg-[#ddd]"><svg viewBox="0 0 6 6" className="size-[5px]" stroke="#000" strokeWidth="1.500"><path d="M1 1l4 4M5 1L1 5" /></svg></button>
          </div>
          <div className="flex items-center gap-[3px] pt-px pr-[6px]">
            <Combo label="选择" value="无选择" className="w-[158px]" />
            <div className="flex">
              {[['pick', '切换 PICKADD'], ['selObj', '选择对象'], ['filter', '快速选择']].map(([n, l]) => (
                <div key={n} className="flex w-[16px] justify-center border border-[#c8c8c8]"><Tool name={n} label={l} /></div>
              ))}
            </div>
          </div>
          <div className="mr-[13px] ml-px flex flex-1 flex-col gap-2 pt-[9px]">
            {groups.map((g) => <PropertyGroup key={g.title} group={g} />)}
          </div>
          <div className="mr-[12px] ml-[2px] h-[33px] border border-[#c6c6c6]" />
        </aside>
      </div>

      <div className="flex h-[15px] items-center border-t border-[#aaa] bg-[#f0f0f0] px-[3px] pt-px">
        <output className={`h-[12px] w-[124px] border border-[#ccc] text-[7px] leading-[11px] ${MONO}`}>16.8338, 30.6630, 0.0000</output>
        <div className="flex flex-1 gap-[3px] pl-[3px]">
          {statusToggles.map(([t, on]) => (
            <button key={t} type="button" aria-pressed={on} className={`h-[12px] border text-[8px] leading-[10px] whitespace-nowrap ${on ? 'border-[#555] border-r-[#ccc] border-b-[#ccc]' : 'border-transparent border-r-[#999]'} ${/[A-Z]/.test(t) ? "font-['Liberation_Mono',monospace] text-[7px]" : ''}`}>{t}</button>
          ))}
        </div>
        <div className="flex items-center gap-[2px] border-l border-[#bbb] pl-[2px]">
          <svg viewBox="0 0 12 12" className="size-3" fill="none" stroke="#44688c" aria-hidden="true"><circle cx="6" cy="7" r="2.500" /><path d="M2 10l3-2M8 6l3-2" /></svg>
          <svg viewBox="0 0 12 12" className="size-3" aria-hidden="true"><path d="M2 4h7v7H2z" fill="#dfb829" stroke="#5b4b13" /><path d="M9 6V2h2" fill="none" stroke="#333" /></svg>
          <button type="button" aria-label="状态栏菜单"><svg viewBox="0 0 12 12" className="block size-3"><path d="M3.500 6h5L6 8.500z" /></svg></button>
          <button type="button" aria-label="全屏显示" className="size-[11px] border border-[#2f5f8c] bg-gradient-to-br from-[#e5f1fa] to-[#79aed8]" />
        </div>
      </div>

      <footer className="flex h-[27px] shrink-0 bg-[linear-gradient(90deg,#20353d_0px,#24373e_140px,#3e4242_200px,#454545_300px,#424242_100%)] text-white">
        <div className="flex w-[294px]">
          {taskApps.map((a) => (
            <button key={a.label} type="button" aria-label={a.label} className={`relative flex flex-1 items-center justify-center ${a.active ? 'bg-[#6c6e6e]' : ''}`}>
              <svg viewBox="0 0 16 16" className={a.label === '开始' ? 'size-[13px]' : 'size-[15px]'}>{a.art}</svg>
              {a.run && <span className={`absolute bottom-0 h-[2px] bg-[#76b9ed] ${a.active ? 'w-full' : 'w-[27px]'}`} />}
            </button>
          ))}
        </div>
        <div className="flex-1" />
        <div className="flex items-center gap-[4px]">
          <svg viewBox="0 0 12 12" className="size-3" fill="none" stroke="#eee"><path d="M2 8l4-4 4 4" /></svg>
          <svg viewBox="0 0 12 12" className="size-3"><circle cx="5" cy="5.500" r="4.500" fill="#3fb54a" /><circle cx="8" cy="7" r="3.500" fill="#e8d83a" /><path d="M3 6h6M6 4v5" stroke="#fff" strokeWidth="1.500" /></svg>
          <svg viewBox="0 0 12 12" className="size-3" fill="none" stroke="#eee"><path d="M3 2.500h8.500v6H5M7 9v2M4 11h6M.5 2v3h2v6" /></svg>
          <svg viewBox="0 0 12 12" className="size-3" fill="none" stroke="#eee"><path d="M1 4.500h2l2.500-3v9L3 7.500H1zM7 4q1 2 0 4M9 3q2 3 0 6M10.500 1.500q2.500 4.500 0 9" /></svg>
          <span className="ml-[3px] text-[9px]">英</span>
          <Sogou className="mr-[3px] ml-[4px] size-[11px]" />
          <span className="flex size-[15px] items-center justify-center rounded-full border-2 border-[#0fbf5b] text-[8px] leading-none">34</span>
        </div>
        <div className="ml-[8px] flex w-[40px] flex-col items-center justify-center pb-[2px] font-['Roboto',sans-serif] text-[8px] leading-[13px]"><time>15:33</time><time>2024/7/23</time></div>
        <button type="button" aria-label="通知" className="mr-[14px] ml-[11px]"><svg viewBox="0 0 12 12" className="size-3" fill="none" stroke="#fff"><path d="M1 1.500h10v7.500H8l-2 2.500L4 9H1z" /></svg></button>
        <div className="mr-[2px] w-px bg-[#777]" />
      </footer>

      <svg viewBox="0 0 10 14" className="pointer-events-none absolute top-[57px] left-[205px] h-[14px] w-[10px]" aria-hidden="true"><path d="M.5.5v10l2.500-2 2 4.500 1.500-1-2-4H8z" fill="#fff" stroke="#555" strokeWidth=".8" /></svg>

      <div className="absolute right-[33px] bottom-[34px] flex h-[20px] items-center">
        <Sogou className="z-10 -mr-[3px] size-[21px]" />
        <div className="flex h-[16px] items-center gap-[3px] border border-[#c5d3e0] bg-[#fdfdfd] pr-[2px] pl-[6px] text-[#0f74d1]">
          <span className="text-[11px] leading-none font-bold">英</span>
          <svg viewBox="0 0 12 12" className="size-3" fill="#0f74d1"><path d="M7 1q6 4 2 8-4 3-8 0 6 0 6-8z" /></svg>
          <svg viewBox="0 0 12 12" className="size-3" fill="#0f74d1"><circle cx="3" cy="3" r="1" /><path d="M7 6q3-1 3 1.500T7 11q1-2 0-5z" /></svg>
          <svg viewBox="0 0 14 12" className="h-3 w-[14px]" fill="#0f74d1"><path d="M4 1q3 2 6 0l4 3-2 3-1.500-1v6h-7V6L2 7 0 4z" /></svg>
          <svg viewBox="0 0 12 12" className="size-[13px]" fill="none" stroke="#3372c4" strokeWidth="1.300"><path d="M0 0h12v12H0z" fill="#dfe6ee" stroke="none" /><path d="M2 2h3v3H2zM7.500 2h3v3h-3zM7.500 7.500h3v3h-3z" /><path d="M2 7.500h3v3H2z" stroke="#d5605a" /></svg>
        </div>
      </div>
    </div>
  );
}
